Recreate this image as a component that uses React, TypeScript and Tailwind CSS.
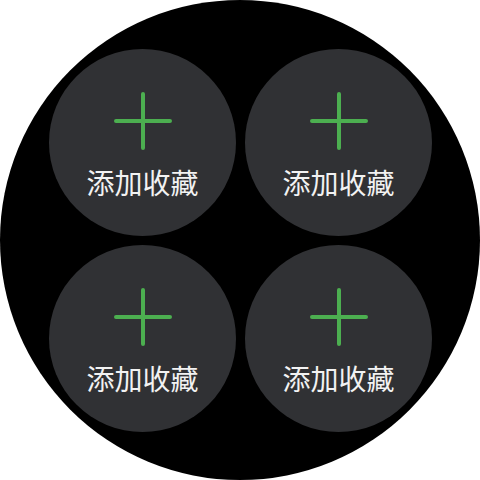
import React from "react";

function Tile() {
  return (
    <div className="w-[187px] h-[187px] rounded-full bg-[#303134] flex flex-col items-center">
      <svg width="60" height="60" viewBox="0 0 60 60" className="mt-[42px]">
        <path d="M30 3 V57 M3 30 H57" stroke="#4CAF50" strokeWidth="4" strokeLinecap="round" fill="none" />
      </svg>
      <div
        className="mt-[17px] text-[28px] leading-[28px] text-[#f2f2f2]"
        style={{ fontFamily: '"Noto Sans CJK SC", "Noto Sans", sans-serif' }}
      >
        添加收藏
      </div>
    </div>
  );
}

export default function App() {
  return (
    <div className="w-[480px] h-[480px] bg-white">
      <div className="w-[480px] h-[480px] rounded-full bg-black flex items-center justify-center">
        <div className="grid grid-cols-2 gap-[9px] ml-[1px]">
          <Tile />
          <Tile />
          <Tile />
          <Tile />
        </div>
      </div>
    </div>
  );
}
